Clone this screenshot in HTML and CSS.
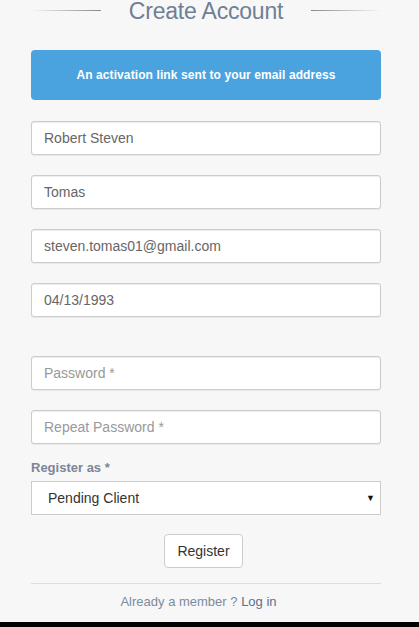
FILE: index.html
```html
<!DOCTYPE html>
<html>
<head>
<meta charset="utf-8">
<link rel="stylesheet" href="styles.css">
</head>
<body>
<div class="page">
  <div class="wrap">
    <div class="heading">
      <span class="rule rule-left"></span>
      <h1 class="title">Create Account</h1>
      <span class="rule rule-right"></span>
    </div>
    <div class="alert">An activation link sent to your email address</div>
    <form class="form">
      <div class="group">
        <input class="field" type="text" value="Robert Steven">
        <input class="field" type="text" value="Tomas">
        <input class="field" type="text" value="steven.tomas01@gmail.com">
        <input class="field" type="text" value="04/13/1993">
      </div>
      <div class="group group-pw">
        <input class="field" type="password" placeholder="Password *">
        <input class="field" type="password" placeholder="Repeat Password *">
      </div>
      <label class="label">Register as *</label>
      <div class="select">
        <span class="select-text">Pending Client</span>
        <span class="select-arrow">&#9660;</span>
      </div>
      <div class="actions">
        <button class="btn" type="button">Register</button>
      </div>
      <hr class="divider">
      <p class="member">Already a member ? <a class="login" href="#">Log in</a></p>
    </form>
  </div>
  <div class="bottom-bar"></div>
</div>
</body>
</html>
```
FILE: styles.css
```css
* { box-sizing: border-box; }
html, body { margin: 0; padding: 0; }
body {
  background: #f7f7f7;
  font-family: "Liberation Sans", Arial, sans-serif;
  color: #333;
}
.page {
  height: 627px;
  display: flex;
  flex-direction: column;
  overflow: hidden;
}
.wrap {
  flex: 1;
  padding: 0 38px 0 31px;
}
.heading {
  display: flex;
  align-items: center;
  height: 22px;
}
.rule {
  height: 1px;
  width: 70px;
  margin-top: -1px;
}
.rule-left { background: linear-gradient(to right, rgba(136,136,136,0), #888); }
.rule-right { background: linear-gradient(to right, #888, rgba(136,136,136,0)); }
.title {
  flex: 1;
  margin: 0;
  text-align: center;
  font-weight: normal;
  font-size: 23px;
  line-height: 24px;
  color: #6f7f95;
  letter-spacing: -0.2px;
}
.alert {
  margin-top: 28px;
  height: 50px;
  border-radius: 4px;
  background: #4aa3df;
  color: #fff;
  font-weight: bold;
  font-size: 12px;
  letter-spacing: 0.1px;
  display: flex;
  align-items: center;
  justify-content: center;
}
.form { margin: 21px 0 0; }
.group {
  display: flex;
  flex-direction: column;
  gap: 20px;
}
.group-pw { margin-top: 39px; }
.field {
  display: block;
  width: 100%;
  height: 34px;
  padding: 0 12px;
  border: 1px solid #ccc;
  border-radius: 3px;
  background: #fff;
  box-shadow: inset 0 1px 1px rgba(0,0,0,0.075), 0 1px 1px rgba(0,0,0,0.06);
  font-family: inherit;
  font-size: 14px;
  color: #666;
  outline: none;
}
.field::placeholder { color: #999; }
.label {
  display: block;
  margin-top: 16px;
  font-size: 13px;
  font-weight: bold;
  color: #7a8699;
  line-height: 16px;
}
.select {
  margin-top: 5px;
  height: 34px;
  border: 1px solid #ccc;
  background: #fff;
  display: flex;
  align-items: center;
  justify-content: space-between;
  padding: 0 5px 0 16px;
  font-size: 14px;
  color: #333;
}
.select-arrow { font-size: 9px; color: #111; }
.actions {
  display: flex;
  justify-content: center;
  margin-top: 19px;
  padding-right: 5px;
}
.btn {
  height: 34px;
  padding: 0 12px;
  background: #fff;
  border: 1px solid #ccc;
  border-radius: 4px;
  font-family: inherit;
  font-size: 14px;
  color: #333;
}
.divider {
  margin: 15px 0 0;
  border: 0;
  border-top: 1px solid #ddd;
}
.member {
  margin: 10px 0 0;
  padding-right: 15px;
  text-align: center;
  font-size: 13px;
  color: #7d8aa0;
}
.login { color: #5b6f8e; text-decoration: none; }
.bottom-bar { height: 5px; background: #000; }
```
